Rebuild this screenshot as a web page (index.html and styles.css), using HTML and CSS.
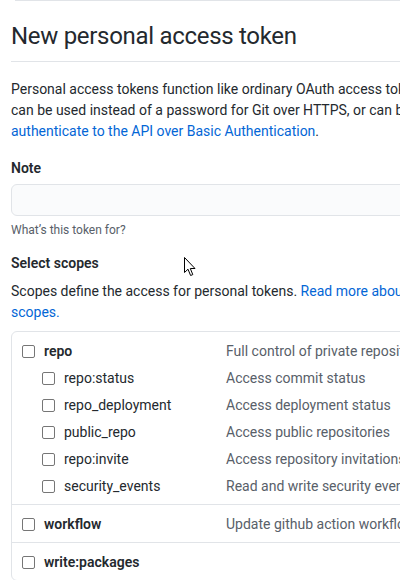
FILE: index.html
```html
<!DOCTYPE html>
<html lang="en">
<head>
<meta charset="utf-8">
<title>New personal access token</title>
<link rel="stylesheet" href="styles.css">
</head>
<body>
<div class="topline"></div>
<main class="page">
  <h1 class="title">New personal access token</h1>
  <p class="intro">Personal access tokens function like ordinary OAuth access tokens. They<br>can be used instead of a password for Git over HTTPS, or can be used to<br><a href="#">authenticate to the API over Basic Authentication</a>.</p>

  <div class="field">
    <label class="label" for="note">Note</label>
    <input class="input" id="note" type="text">
    <p class="hint">What’s this token for?</p>
  </div>

  <h3 class="label">Select scopes</h3>
  <p class="intro">Scopes define the access for personal tokens. <a href="#">Read more about OAuth</a><br><a href="#">scopes.</a></p>

  <div class="scopes">
    <div class="group">
      <div class="row"><label class="name main"><input type="checkbox" class="cb"><span>repo</span></label><span class="desc">Full control of private repositories</span></div>
      <div class="row"><label class="name sub"><input type="checkbox" class="cb"><span>repo:status</span></label><span class="desc">Access commit status</span></div>
      <div class="row"><label class="name sub"><input type="checkbox" class="cb"><span>repo_deployment</span></label><span class="desc">Access deployment status</span></div>
      <div class="row"><label class="name sub"><input type="checkbox" class="cb"><span>public_repo</span></label><span class="desc">Access public repositories</span></div>
      <div class="row"><label class="name sub"><input type="checkbox" class="cb"><span>repo:invite</span></label><span class="desc">Access repository invitations</span></div>
      <div class="row"><label class="name sub"><input type="checkbox" class="cb"><span>security_events</span></label><span class="desc">Read and write security events</span></div>
    </div>
    <div class="group">
      <div class="row"><label class="name main"><input type="checkbox" class="cb"><span>workflow</span></label><span class="desc">Update github action workflows</span></div>
    </div>
    <div class="group">
      <div class="row"><label class="name main"><input type="checkbox" class="cb"><span>write:packages</span></label><span class="desc"></span></div>
    </div>
  </div>
</main>
<svg class="cursor" width="13" height="20" viewBox="0 0 13 20" aria-hidden="true">
  <path d="M0.5 0.5 L0.5 15.5 L4 12.2 L6.6 18.5 L8.8 17.6 L6.3 11.5 L11 11.5 Z" fill="#fff" stroke="#000" stroke-width="1" stroke-linejoin="miter"/>
</svg>
</body>
</html>
```
FILE: styles.css
```css
html, body {
  margin: 0;
  padding: 0;
  background: #fff;
  overflow: hidden;
}
body {
  width: 400px;
  height: 580px;
  position: relative;
  font-family: "Segoe UI", Roboto, "Noto Sans", sans-serif;
  font-size: 14px;
  line-height: 21px;
  color: #24292e;
}
.topline {
  margin-left: 15px;
  height: 1px;
  background: #e1e4e8;
}
.page {
  padding-left: 11px;
  width: 560px;
}
.title {
  margin: 0;
  padding-top: 17px;
  padding-bottom: 7px;
  font-size: 24px;
  line-height: 36px;
  font-weight: 400;
  letter-spacing: -0.3px;
  border-bottom: 1px solid #e1e4e8;
}
.intro {
  margin: 17px 0 0;
  white-space: nowrap;
}
a {
  color: #0366d6;
  text-decoration: none;
}
.field {
  margin-top: 16px;
}
.label {
  display: block;
  margin: 0;
  font-size: 14px;
  font-weight: 600;
  line-height: 21px;
}
h3.label {
  margin-top: 14px;
}
.input {
  display: block;
  box-sizing: border-box;
  margin: 5px 0 0;
  width: 560px;
  height: 32px;
  border: 1px solid #e1e4e8;
  border-radius: 6px;
  background: #fafbfc;
}
.hint {
  margin: 5px 0 0;
  font-size: 12px;
  line-height: 18px;
  color: #586069;
}
.scopes {
  margin-top: 8px;
  border: 1px solid #e1e4e8;
  border-radius: 6px;
}
h3.label + .intro {
  margin-top: 7px;
}
.group {
  padding: 9px 10px 7px;
  display: flex;
  flex-direction: column;
  gap: 6px;
}
.group + .group {
  border-top: 1px solid #e1e4e8;
}
.row {
  display: grid;
  grid-template-columns: 204px 1fr;
  white-space: nowrap;
}
.name {
  display: flex;
  align-items: center;
  gap: 9px;
  font-weight: 600;
}
.name.sub {
  padding-left: 20px;
  font-weight: 400;
}
.desc {
  color: #586069;
}
.cb {
  appearance: none;
  -webkit-appearance: none;
  margin: 0;
  width: 13px;
  height: 13px;
  box-sizing: border-box;
  border: 1px solid #767676;
  border-radius: 2px;
  background: #fff;
  flex: none;
}
.cursor {
  position: absolute;
  left: 184px;
  top: 257px;
}
```
